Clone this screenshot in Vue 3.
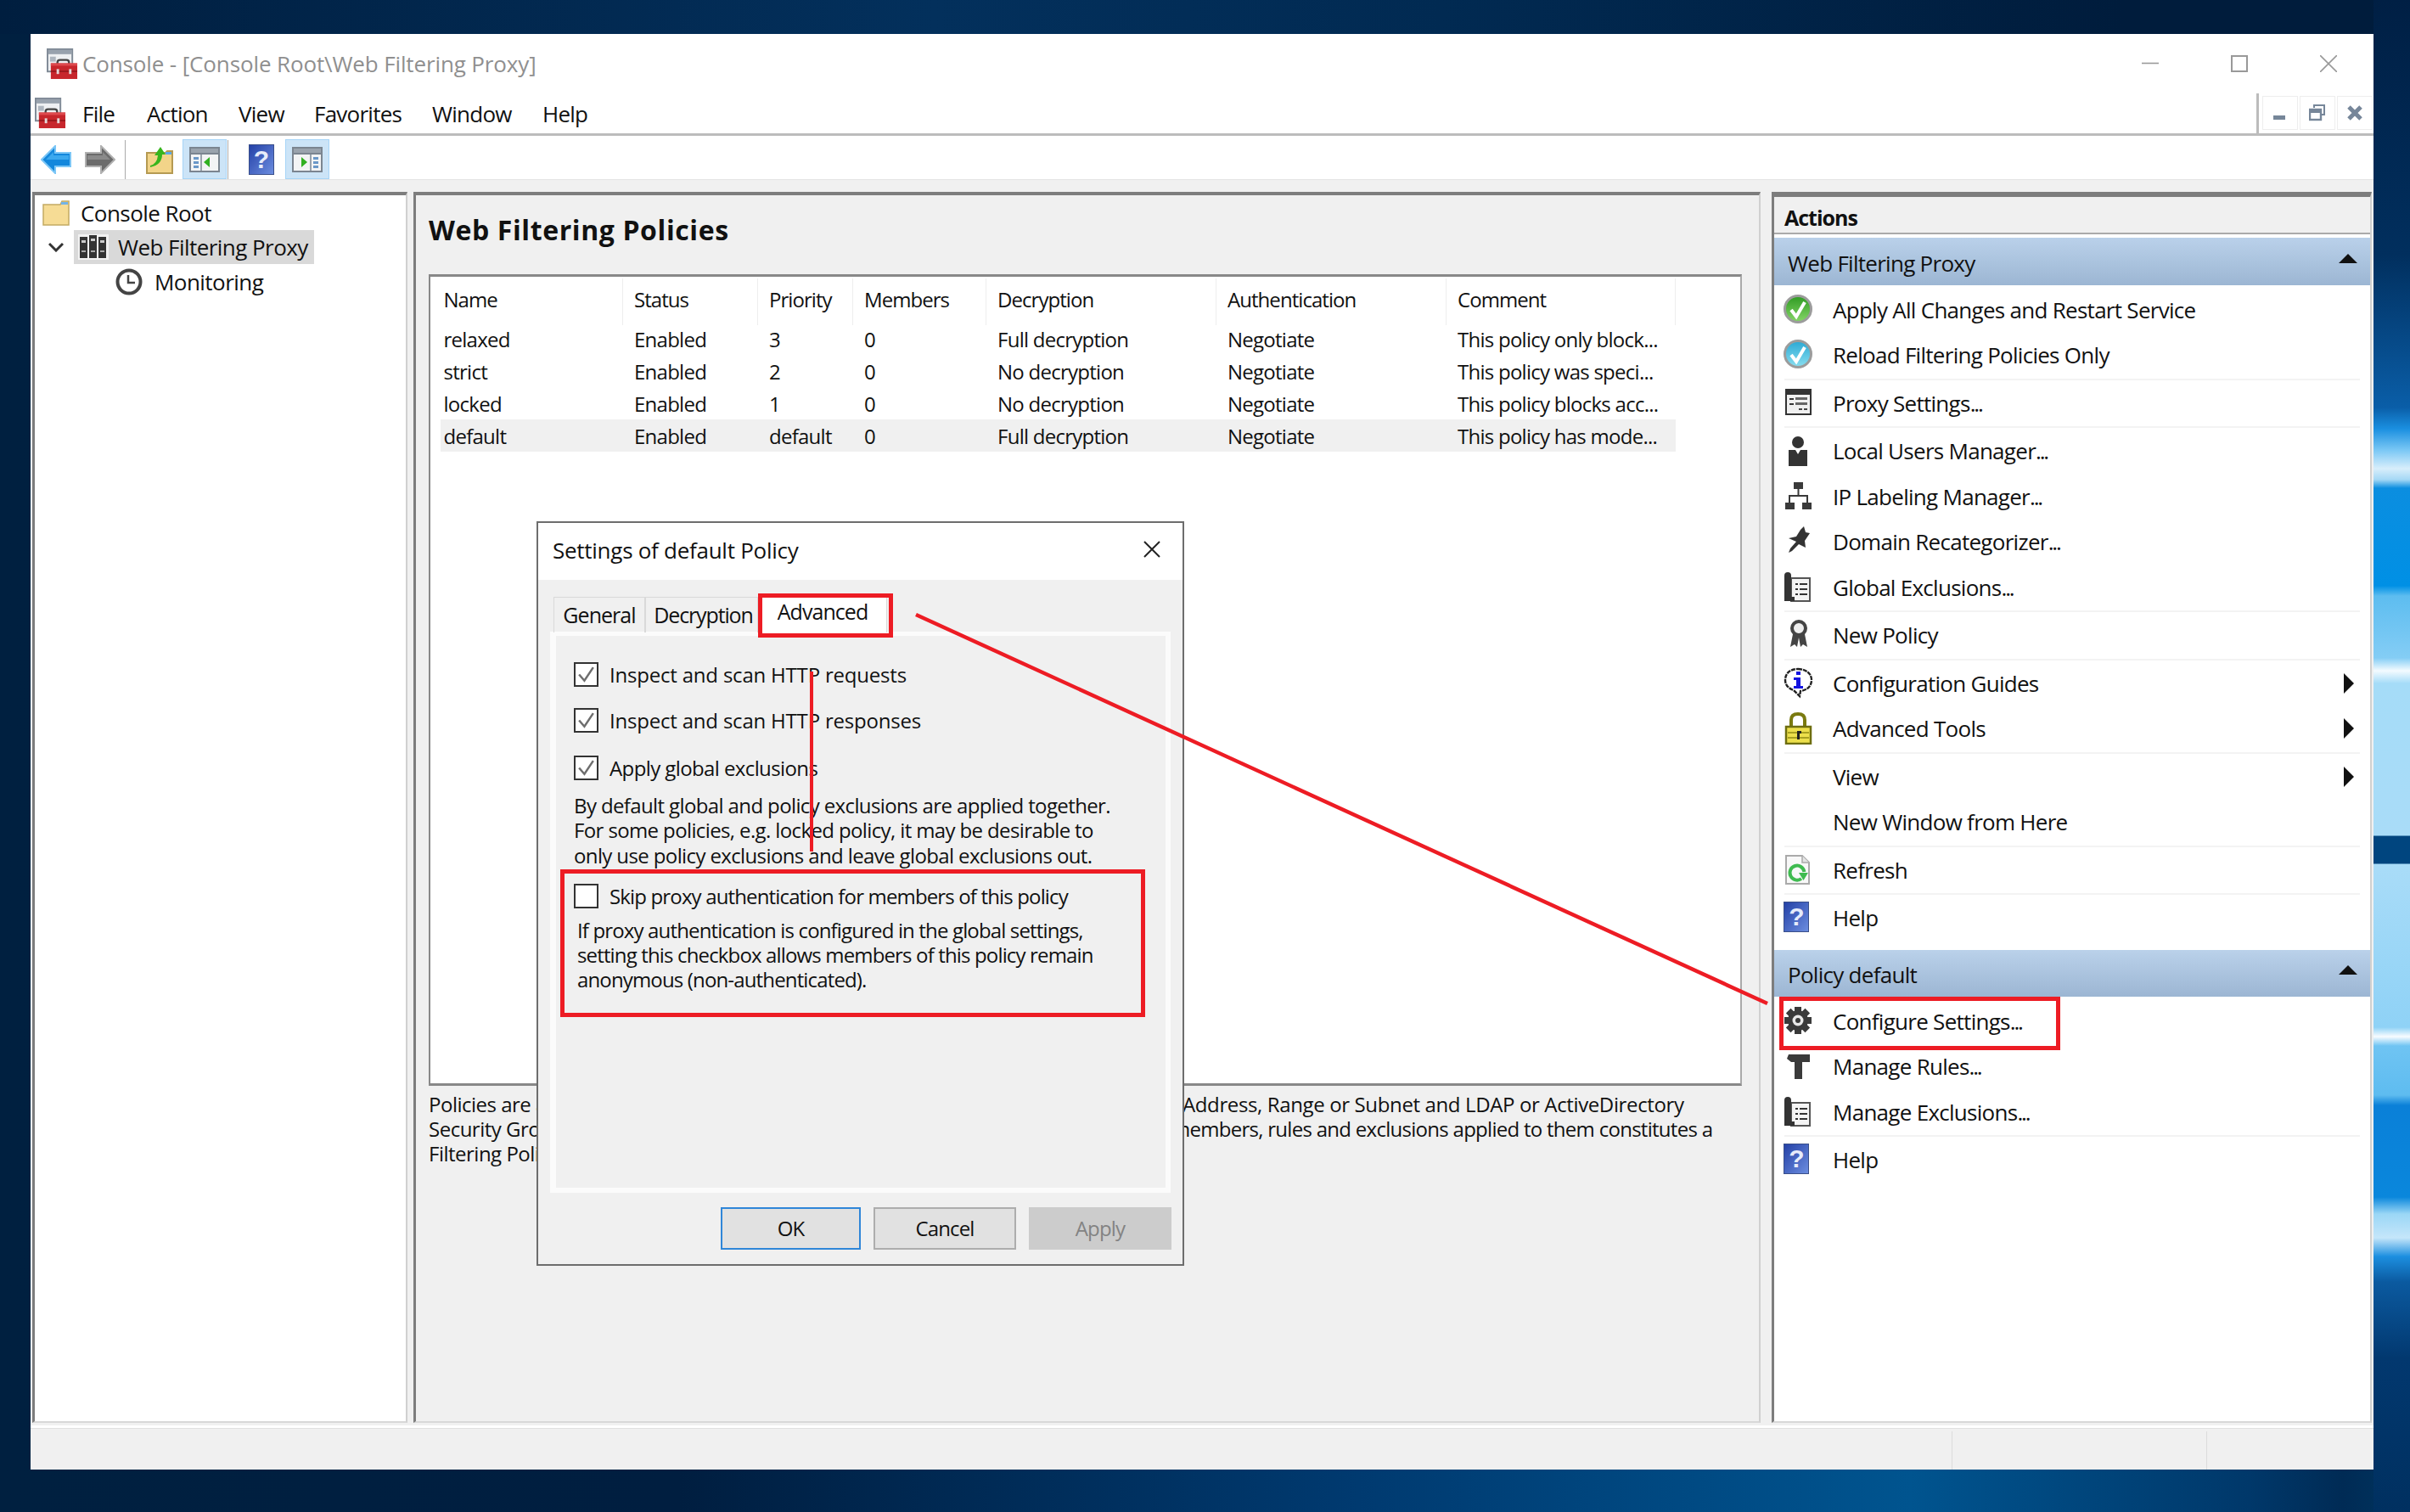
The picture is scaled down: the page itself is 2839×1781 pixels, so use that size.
<script setup>
const menus = ['File', 'Action', 'View', 'Favorites', 'Window', 'Help']

const columns = ['Name', 'Status', 'Priority', 'Members', 'Decryption', 'Authentication', 'Comment']
const policies = [
  ['relaxed', 'Enabled', '3', '0', 'Full decryption', 'Negotiate', 'This policy only block...'],
  ['strict', 'Enabled', '2', '0', 'No decryption', 'Negotiate', 'This policy was speci...'],
  ['locked', 'Enabled', '1', '0', 'No decryption', 'Negotiate', 'This policy blocks acc...'],
  ['default', 'Enabled', 'default', '0', 'Full decryption', 'Negotiate', 'This policy has mode...']
]

const descLines = [
  ['Policies are assigned', 'Address, Range or Subnet and LDAP or ActiveDirectory'],
  ['Security Groups. A set', 'members, rules and exclusions applied to them constitutes a'],
  ['Filtering Policy.', '']
]

const icons = {
  toolbox: '<rect x="1" y="1" width="30" height="27" fill="#eef0f2" stroke="#7f8a96" stroke-width="2"/><rect x="2" y="2" width="28" height="5" fill="#98a2ad"/><rect x="4" y="10" width="7" height="6" fill="#aeb6bf"/><path d="M13 20v-3q0-3 3-3h8q3 0 3 3v3" fill="none" stroke="#444" stroke-width="2.4"/><rect x="5" y="18" width="32" height="19" fill="#c7262c"/><rect x="5" y="18" width="32" height="3" fill="#de4a4e"/><rect x="5" y="27" width="32" height="1.5" fill="#8f1418"/><rect x="12" y="25" width="3" height="6" fill="#e4d8d8"/><rect x="27" y="25" width="3" height="6" fill="#e4d8d8"/>',
  back: '<path d="M1 17 17 1v8h18v16H17v8z" fill="#1387dc" stroke="#7cc6f6" stroke-width="2"/><path d="M6 17 15 8v4h18v5z" fill="#3aa8ee"/>',
  forward: '<path d="M35 17 19 1v8H1v16h18v8z" fill="#6b6b6b" stroke="#b0b0b0" stroke-width="2"/><path d="M30 17 21 8v4H3v5z" fill="#8a8a8a"/>',
  folderUp: '<path d="M1 9h22l2-2h6v26H1z" fill="#f2d489" stroke="#b59a52" stroke-width="2"/><rect x="23" y="8" width="7" height="3" fill="#58a8e8"/><path d="M5 24q8-2 9-12h-4l7-10 6 9h-4q0 12-14 15z" fill="#37b51d"/>',
  panelLeft: '<rect x="1" y="1" width="34" height="28" fill="#f3f4f5" stroke="#7b8590" stroke-width="2"/><rect x="2" y="2" width="32" height="5" fill="#9aa3ad"/><rect x="2" y="7" width="32" height="2" fill="#7b8590"/><rect x="13" y="9" width="2" height="19" fill="#9aa3ad"/><rect x="5" y="12" width="6" height="3" fill="#6b98c8"/><rect x="5" y="17" width="6" height="3" fill="#6b98c8"/><rect x="5" y="22" width="6" height="3" fill="#6b98c8"/><path d="M24 12v12l-7-6z" fill="#31b021"/>',
  panelRight: '<rect x="1" y="1" width="34" height="28" fill="#f3f4f5" stroke="#7b8590" stroke-width="2"/><rect x="2" y="2" width="32" height="5" fill="#9aa3ad"/><rect x="2" y="7" width="32" height="2" fill="#7b8590"/><rect x="21" y="9" width="2" height="19" fill="#9aa3ad"/><rect x="25" y="12" width="6" height="3" fill="#6b98c8"/><rect x="25" y="17" width="6" height="3" fill="#6b98c8"/><rect x="25" y="22" width="6" height="3" fill="#6b98c8"/><path d="M11 12v12l7-6z" fill="#31b021"/>',
  help: '<defs><linearGradient id="hg" x1="0" y1="0" x2="1" y2="1"><stop offset="0" stop-color="#2340a6"/><stop offset="1" stop-color="#6d8ee0"/></linearGradient></defs><rect x="0.5" y="0.5" width="29" height="35" fill="url(#hg)" stroke="#3a4f8a"/><text x="15" y="28" font-family="Liberation Sans, sans-serif" font-weight="700" font-size="30" text-anchor="middle" fill="#e6ecfa">?</text>',
  folder: '<path d="M1 5h20l2-4h8v28H1z" fill="#f6dc95" stroke="#c3aa63" stroke-width="1.5"/><rect x="22" y="2" width="8" height="3" fill="#74b4e8"/>',
  servers: '<rect x="0" y="0" width="36" height="30" fill="#f2f2f2"/><rect x="2" y="3" width="9" height="25" fill="#333"/><rect x="13" y="1" width="9" height="27" fill="#333"/><rect x="24" y="3" width="9" height="25" fill="#333"/><rect x="4" y="7" width="5" height="3" fill="#ccc"/><rect x="15" y="5" width="5" height="3" fill="#ccc"/><rect x="26" y="7" width="5" height="3" fill="#ccc"/><rect x="4" y="19" width="5" height="2" fill="#aaa"/><rect x="15" y="19" width="5" height="2" fill="#aaa"/><rect x="26" y="19" width="5" height="2" fill="#aaa"/>',
  clock: '<circle cx="16" cy="16" r="13.5" fill="#fff" stroke="#444" stroke-width="4"/><path d="M15 8v9h8" fill="none" stroke="#444" stroke-width="2.5"/>',
  checkGreen: '<defs><linearGradient id="cg" x1="0" y1="0" x2="0" y2="1"><stop offset="0" stop-color="#2e9a22"/><stop offset="1" stop-color="#86d668"/></linearGradient></defs><circle cx="17" cy="18" r="15.5" fill="url(#cg)" stroke="#9c9c9c" stroke-width="3"/><path d="M9 19l6 8 10-17" fill="none" stroke="#fff" stroke-width="4"/>',
  checkBlue: '<defs><linearGradient id="cb" x1="0" y1="0" x2="0" y2="1"><stop offset="0" stop-color="#2aa8d4"/><stop offset="1" stop-color="#8adff0"/></linearGradient></defs><circle cx="17" cy="18" r="15.5" fill="url(#cb)" stroke="#9c9c9c" stroke-width="3"/><path d="M9 19l6 8 10-17" fill="none" stroke="#fff" stroke-width="4"/>',
  settings: '<rect x="3" y="3" width="29" height="29" fill="#f0f0f0" stroke="#333" stroke-width="2"/><rect x="3" y="3" width="29" height="6" fill="#333"/><rect x="7" y="13" width="5" height="2" fill="#333"/><rect x="7" y="19" width="5" height="2" fill="#333"/><rect x="14" y="12" width="14" height="3" fill="#666"/><rect x="14" y="18" width="14" height="3" fill="#666"/><rect x="18" y="25" width="4" height="2" fill="#444"/><rect x="24" y="25" width="4" height="2" fill="#444"/>',
  user: '<circle cx="17" cy="9" r="7" fill="#333"/><path d="M6 18h8l3 5 3-5h8v19H6z" fill="#333"/>',
  network: '<rect x="12" y="2" width="11" height="8" fill="#3a3a3a"/><rect x="16.5" y="10" width="2" height="8" fill="#3a3a3a"/><path d="M7 26v-8h21v8" fill="none" stroke="#3a3a3a" stroke-width="2"/><rect x="2" y="26" width="11" height="8" fill="#3a3a3a"/><rect x="22" y="26" width="11" height="8" fill="#3a3a3a"/>',
  pin: '<path d="M24 1l2 7 5 1-6 9 1 8-8-4-8 8-4 2 2-5 7-8-9-4 9-2 5-8z" fill="#333"/>',
  exclusions: '<rect x="9" y="8" width="22" height="27" fill="#f4f4f4" stroke="#555" stroke-width="2"/><path d="M1 5q0-4 4-4t4 4v25H1z" fill="#333"/><rect x="1" y="30" width="12" height="5" fill="#333"/><rect x="14" y="14" width="3" height="2" fill="#333"/><rect x="19" y="14" width="9" height="2" fill="#333"/><rect x="14" y="20" width="3" height="2" fill="#333"/><rect x="19" y="20" width="9" height="2" fill="#333"/><rect x="14" y="26" width="3" height="2" fill="#333"/><rect x="19" y="26" width="9" height="2" fill="#333"/>',
  ribbon: '<path d="M11 18 8 33l5-3 3 3 2-11 2 11 3-3 5 3-3-15z" fill="#444"/><circle cx="18" cy="11" r="8" fill="#eee" stroke="#444" stroke-width="4"/>',
  info: '<path d="M17 2c9 0 16 5 16 13s-6 12-13 13l-1 6-7-7C6 25 2 21 2 15 2 7 8 2 17 2z" fill="#fff" stroke="#222" stroke-width="2.4" stroke-dasharray="5 1"/><rect x="15" y="5" width="5" height="4" fill="#1414e0"/><path d="M12 12h8v10h3v3H12v-3h3v-7h-3z" fill="#1414e0"/>',
  lock: '<path d="M9 17V9q0-7 8-7t8 7v8" fill="none" stroke="#7a7a10" stroke-width="4"/><rect x="3" y="17" width="29" height="20" fill="#ecdf4c" stroke="#6e6e10" stroke-width="2.5"/><rect x="5" y="23" width="25" height="2" fill="#a8a020"/><rect x="5" y="29" width="25" height="2" fill="#a8a020"/><path d="M16 22h5v3h-2v7h-3z" fill="#222"/>',
  refresh: '<path d="M3 2h19l8 8v25H3z" fill="#f8f8f8" stroke="#aaa" stroke-width="2"/><path d="M22 2v8h8" fill="#e4e4e4" stroke="#aaa" stroke-width="1.5"/><path d="M21 29a8.5 8.5 0 1 1 3.4-8" fill="none" stroke="#3fbb50" stroke-width="4"/><path d="M18 22h11l-5.500 9z" fill="#3fbb50"/>',
  gear: '<g fill="#3a3a3a"><rect x="13" y="2" width="8" height="32"/><rect x="13" y="2" width="8" height="32" transform="rotate(45 17 18)"/><rect x="13" y="2" width="8" height="32" transform="rotate(90 17 18)"/><rect x="13" y="2" width="8" height="32" transform="rotate(135 17 18)"/><circle cx="17" cy="18" r="12"/></g><circle cx="17" cy="18" r="6.500" fill="#e8e8e8"/><circle cx="17" cy="18" r="3" fill="#3a3a3a"/>',
  hammer: '<path d="M6 5h25v9h-9v20h-9V14H9l-5-4z" fill="#3a3a3a"/>'
}

const topActions = [
  { label: 'Apply All Changes and Restart Service', icon: 'checkGreen' },
  { label: 'Reload Filtering Policies Only', icon: 'checkBlue', sep: true },
  { label: 'Proxy Settings', dots: true, icon: 'settings', sep: true },
  { label: 'Local Users Manager', dots: true, icon: 'user' },
  { label: 'IP Labeling Manager', dots: true, icon: 'network' },
  { label: 'Domain Recategorizer', dots: true, icon: 'pin' },
  { label: 'Global Exclusions', dots: true, icon: 'exclusions', sep: true },
  { label: 'New Policy', icon: 'ribbon', sep: true },
  { label: 'Configuration Guides', icon: 'info', more: true },
  { label: 'Advanced Tools', icon: 'lock', more: true, sep: true },
  { label: 'View', more: true },
  { label: 'New Window from Here', sep: true },
  { label: 'Refresh', icon: 'refresh', sep: true },
  { label: 'Help', icon: 'help' }
]

const policyActions = [
  { label: 'Configure Settings', dots: true, icon: 'gear' },
  { label: 'Manage Rules', dots: true, icon: 'hammer' },
  { label: 'Manage Exclusions', dots: true, icon: 'exclusions', sep: true },
  { label: 'Help', icon: 'help' }
]

const groups = [
  { title: 'Web Filtering Proxy', items: topActions },
  { title: 'Policy default', items: policyActions }
]

const options = [
  { label: 'Inspect and scan HTTP requests', kind: 'http' },
  { label: 'Inspect and scan HTTP responses', kind: 'http' },
  { label: 'Apply global exclusions', kind: 'global' }
]
</script>

<template>
  <div class="desktop">
    <div class="window">
      <header class="titlebar">
        <svg class="ic-toolbox" viewBox="0 0 38 38" v-html="icons.toolbox"></svg>
        <span class="title-text">Console - [Console Root\Web Filtering Proxy]</span>
        <div class="caption">
          <svg viewBox="0 0 20 20"><path d="M0 9.5h20" stroke="#999" stroke-width="1.6" /></svg>
          <svg viewBox="0 0 20 20"><rect x="1" y="1" width="18" height="18" fill="none" stroke="#999" stroke-width="2" /></svg>
          <svg viewBox="0 0 20 20"><path d="M0 0l20 20M20 0 0 20" stroke="#999" stroke-width="1.6" /></svg>
        </div>
      </header>

      <nav class="menubar">
        <svg class="ic-toolbox" viewBox="0 0 38 38" v-html="icons.toolbox"></svg>
        <div class="menus">
          <span v-for="m in menus" :key="m">{{ m }}</span>
        </div>
        <div class="mdi">
          <div class="mdi-btn"><svg viewBox="0 0 20 20"><rect x="2" y="13" width="14" height="5" fill="#768699" /></svg></div>
          <div class="mdi-btn"><svg viewBox="0 0 20 20"><path d="M6 4V1h12v11h-3" fill="none" stroke="#768699" stroke-width="2" /><rect x="1" y="6" width="13" height="12" fill="none" stroke="#768699" stroke-width="2.4" /><rect x="1" y="6" width="13" height="4" fill="#768699" /></svg></div>
          <div class="mdi-btn"><svg viewBox="0 0 20 20"><path d="M3 3l14 14M17 3 3 17" stroke="#768699" stroke-width="5" /></svg></div>
        </div>
      </nav>

      <div class="toolbar">
        <svg class="tb-arrow" viewBox="0 0 36 34" v-html="icons.back"></svg>
        <svg class="tb-arrow tb-forward" viewBox="0 0 36 34" v-html="icons.forward"></svg>
        <i class="tb-sep"></i>
        <svg class="tb-folder" viewBox="0 0 32 34" v-html="icons.folderUp"></svg>
        <div class="tb-toggle"><svg viewBox="0 0 36 30" v-html="icons.panelLeft"></svg></div>
        <i class="tb-sep tb-sep2"></i>
        <svg class="tb-help" viewBox="0 0 30 36" v-html="icons.help"></svg>
        <div class="tb-toggle tb-toggle2"><svg viewBox="0 0 36 30" v-html="icons.panelRight"></svg></div>
      </div>

      <main class="workspace">
        <section class="panel tree">
          <div class="tree-row root-row">
            <svg class="ic-folder" viewBox="0 0 32 30" v-html="icons.folder"></svg>
            <span>Console Root</span>
          </div>
          <div class="tree-row proxy-row">
            <svg class="chevron" viewBox="0 0 18 12"><path d="M1 2l8 8 8-8" fill="none" stroke="#333" stroke-width="3" /></svg>
            <div class="selected-node">
              <svg class="ic-servers" viewBox="0 0 36 30" v-html="icons.servers"></svg>
              <span>Web Filtering Proxy</span>
            </div>
          </div>
          <div class="tree-row monitor-row">
            <svg class="ic-clock" viewBox="0 0 32 32" v-html="icons.clock"></svg>
            <span>Monitoring</span>
          </div>
        </section>

        <section class="panel center">
          <h1 class="center-title">Web Filtering Policies</h1>
          <div class="table-box">
            <div class="grid-row grid-head">
              <span v-for="c in columns" :key="c">{{ c }}</span>
            </div>
            <div v-for="(p, i) in policies" :key="p[0]" class="grid-row" :class="{ selected: i === 3 }">
              <span v-for="(v, j) in p" :key="j">{{ v }}</span>
            </div>
          </div>
          <div class="description">
            <div v-for="(l, i) in descLines" :key="i" class="desc-line">
              <span class="desc-left">{{ l[0] }}</span>
              <span class="desc-right">{{ l[1] }}</span>
            </div>
          </div>
        </section>

        <aside class="panel actions">
          <div class="actions-head">Actions</div>
          <div v-for="g in groups" :key="g.title" class="group">
            <div class="group-head">
              <span class="group-title">{{ g.title }}</span>
              <svg class="collapse" viewBox="0 0 22 11"><path d="M11 0l11 11H0z" fill="#111" /></svg>
            </div>
            <div class="group-list">
              <template v-for="it in g.items" :key="it.label">
                <div class="action">
                  <span class="action-icon">
                    <svg v-if="it.icon" viewBox="0 0 36 38" v-html="icons[it.icon]"></svg>
                  </span>
                  <span class="action-label">{{ it.label }}<span v-if="it.dots" class="dots">...</span></span>
                  <svg v-if="it.more" class="more" viewBox="0 0 12 24"><path d="M0 0l12 12L0 24z" fill="#111" /></svg>
                </div>
                <div v-if="it.sep" class="action-sep"></div>
              </template>
            </div>
          </div>
        </aside>
      </main>

      <footer class="statusbar">
        <i></i><i></i><i></i>
      </footer>
    </div>

    <div class="dialog">
      <div class="dialog-title">
        <span>Settings of default Policy</span>
        <svg viewBox="0 0 20 20"><path d="M1 1l18 18M19 1 1 19" stroke="#222" stroke-width="2" /></svg>
      </div>
      <div class="tabs">
        <span class="tab">General</span>
        <span class="tab">Decryption</span>
        <span class="tab active">Advanced</span>
      </div>
      <div class="page">
        <div v-for="o in options" :key="o.label" class="check-row" :class="o.kind">
          <span class="box"><svg viewBox="0 0 24 24"><path d="M4 12l6 7L20 4" fill="none" stroke="#6e6e6e" stroke-width="2.4" /></svg></span>
          <span>{{ o.label }}</span>
        </div>
        <p class="note first">By default global and policy exclusions are applied together.<br />For some policies, e.g. locked policy, it may be desirable to<br />only use policy exclusions and leave global exclusions out.</p>
        <div class="check-row skip">
          <span class="box"></span>
          <span>Skip proxy authentication for members of this policy</span>
        </div>
        <p class="note second">If proxy authentication is configured in the global settings,<br />setting this checkbox allows members of this policy remain<br />anonymous (non-authenticated).</p>
      </div>
      <div class="buttons">
        <button class="btn ok">OK</button>
        <button class="btn cancel">Cancel</button>
        <button class="btn apply">Apply</button>
      </div>
    </div>

    <svg class="annotations" viewBox="0 0 2839 1781">
      <g fill="none" stroke="#ed1c24" stroke-width="5">
        <rect x="895.5" y="701.5" width="154" height="47" />
        <rect x="662.5" y="1026.5" width="684" height="169" />
        <rect x="2098.5" y="1176.5" width="326" height="58" />
      </g>
      <path d="M956 791v212" stroke="#ed1c24" stroke-width="4" />
      <path d="M1079 724 2082 1182" stroke="#ed1c24" stroke-width="4.500" />
    </svg>
  </div>
</template>

<style scoped>
.desktop {
  position: relative;
  box-sizing: border-box;
  width: 2839px;
  height: 1781px;
  overflow: hidden;
  padding: 40px 43px 50px 36px;
  font-family: "Open Sans", "Noto Sans", sans-serif;
  color: #111;
  background-color: #002244;
  background-image:
    linear-gradient(180deg, #001f44 0, #012f5e 300px, #0a5ea8 480px, #1a8fe0 505px, #79c7f5 530px, #d8eefb 552px, #a4d8f5 565px, #0b8ee0 575px, #0090e5 690px, #5dbdf0 702px, #84cdf5 775px, #f4fbff 790px, #a5dcf8 805px, #a9dcf8 984px, #00457f 985px, #00457f 1017px, #a9dcf8 1018px, #8fd2f6 1210px, #f8fcff 1221px, #6fc4f3 1232px, #5ebcf0 1290px, #0a80d8 1302px, #0a87dc 1410px, #9bd7f6 1430px, #c5e6fa 1458px, #1c8fe0 1480px, #0b5aa0 1510px, #02386f 1600px, #003060 1781px),
    linear-gradient(90deg, #001e3f 0, #03305c 1100px, #012a52 1700px, #001c3c 2500px, #001c3c 2839px),
    linear-gradient(90deg, #002040 0, #001e40 800px, #003a70 1600px, #00548f 2250px, #00386a 2650px, #002b55 2760px, #003560 2839px);
  background-size: 43px 100%, 100% 40px, 100% 100%;
  background-position: right top, left top, left top;
  background-repeat: no-repeat;
}

.window {
  display: flex;
  flex-direction: column;
  height: 100%;
  background: #f0f0f0;
}

.titlebar {
  display: flex;
  align-items: center;
  height: 70px;
  padding-left: 19px;
  background: #fff;
}
.ic-toolbox { width: 37px; height: 37px; flex: none; }
.title-text {
  margin-left: 5px;
  font-size: 26px;
  letter-spacing: -0.13px;
  color: #8f8f8f;
}
.caption {
  display: flex;
  gap: 85px;
  margin-left: auto;
  padding-right: 43px;
}
.caption svg { width: 20px; height: 20px; }

.menubar {
  display: flex;
  align-items: center;
  height: 50px;
  padding-left: 5px;
  background: #fff;
  border-bottom: 3px solid #bcbcbc;
  box-sizing: border-box;
}
.menus {
  display: grid;
  grid-template-columns: 76px 108px 89px 139px 130px 80px;
  margin-left: 19px;
  font-size: 26px;
  letter-spacing: -0.75px;
}
.mdi {
  display: flex;
  gap: 2px;
  align-self: stretch;
  margin-left: auto;
  padding: 3px 1px 4px 4px;
  border-left: 3px solid #bcbcbc;
  background: #fff;
}
.mdi-btn {
  display: flex;
  align-items: center;
  justify-content: center;
  width: 40px;
  border: 1px solid #eee;
}
.mdi-btn svg { width: 20px; height: 20px; }

.toolbar {
  display: flex;
  align-items: center;
  height: 52px;
  box-sizing: border-box;
  padding: 4px 0 0 12px;
  background: #fff;
  border-bottom: 1px solid #e4e4e4;
}
.tb-arrow { width: 36px; height: 34px; }
.tb-forward { margin-left: 16px; }
.tb-sep { width: 1px; height: 46px; margin-left: 11px; background: #aaa; }
.tb-folder { width: 32px; height: 34px; margin-left: 24px; }
.tb-toggle {
  display: flex;
  align-items: center;
  justify-content: center;
  box-sizing: border-box;
  width: 52px;
  height: 47px;
  margin-left: 11px;
  background: #cce4f7;
  border: 1px solid #a6d4f7;
}
.tb-toggle svg { width: 36px; height: 30px; }
.tb-sep2 { margin-left: 1px; }
.tb-help { width: 30px; height: 36px; margin-left: 24px; }
.tb-toggle2 { margin-left: 13px; }

.workspace {
  display: flex;
  flex: 1;
  min-height: 0;
  padding: 14px 0 3px 2px;
  border-bottom: 3px solid #fff;
}

.panel {
  box-sizing: border-box;
  border-top: 4px solid #7d7d7d;
  border-left: 3px solid #7d7d7d;
  border-right: 2px solid #d0d0d0;
  border-bottom: 2px solid #d8d8d8;
}

.tree {
  width: 442px;
  padding-top: 1px;
  background: #fff;
  font-size: 26px;
  letter-spacing: -0.55px;
}
.tree-row {
  display: flex;
  align-items: center;
  height: 40px;
}
.root-row { padding-left: 9px; }
.ic-folder { width: 32px; height: 30px; margin-right: 13px; }
.proxy-row { padding-left: 16px; }
.chevron { width: 18px; height: 12px; margin-right: 12px; }
.selected-node {
  display: flex;
  align-items: center;
  height: 40px;
  padding: 0 0 0 5px;
  width: 283px;
  box-sizing: border-box;
  background: #d9d9d9;
}
.ic-servers { width: 36px; height: 30px; margin-right: 11px; }
.monitor-row { padding-left: 95px; height: 42px; }
.ic-clock { width: 32px; height: 32px; margin-right: 14px; }

.center {
  width: 1587px;
  margin-left: 7px;
  padding-left: 15px;
  background: #f0f0f0;
}
.center-title {
  margin: 21px 0 0;
  height: 40px;
  font-size: 32px;
  line-height: 40px;
  font-weight: 700;
  letter-spacing: 0.6px;
}
.table-box {
  box-sizing: border-box;
  width: 1547px;
  height: 956px;
  margin-top: 32px;
  padding: 2px 0 0 12px;
  background: #fff;
  border-top: 3px solid #888;
  border-left: 2px solid #888;
  border-right: 2px solid #aaa;
  border-bottom: 3px solid #888;
  font-size: 24px;
  letter-spacing: -0.74px;
}
.grid-row {
  display: grid;
  grid-template-columns: 215px 159px 112px 157px 271px 271px 270px;
  width: 1455px;
  height: 38px;
  align-items: center;
  white-space: nowrap;
}
.grid-row > span { padding-left: 13px; }
.grid-row > span:first-child { padding-left: 3.5px; }
.grid-head {
  height: 55px;
  margin-bottom: -3px;
  letter-spacing: -0.95px;
}
.grid-head > span {
  display: flex;
  align-items: center;
  height: 55px;
  box-sizing: border-box;
  padding-bottom: 6px;
  border-right: 1px solid #eee;
}
.selected { background: #f0f0f0; }

.description {
  margin-top: 7px;
  font-size: 24px;
  line-height: 29px;
  letter-spacing: -0.5px;
}
.desc-line { display: flex; white-space: nowrap; }
.desc-left { width: 888px; flex: none; }
.desc-line:nth-child(1) .desc-right { letter-spacing: -0.37px; }
.desc-line:nth-child(2) .desc-right { margin-left: -13px; letter-spacing: -0.72px; }

.actions {
  width: 707px;
  margin-left: 13px;
  background: #fff;
  border-top-width: 6px;
  font-size: 26px;
  letter-spacing: -0.72px;
}
.actions-head {
  height: 44px;
  box-sizing: border-box;
  padding-left: 12px;
  line-height: 48px;
  font-size: 25px;
  font-weight: 700;
  letter-spacing: -1px;
  background: #f0f0f0;
  border-bottom: 2px solid #aaa;
}
.group-head {
  display: flex;
  align-items: center;
  justify-content: space-between;
  height: 56px;
  margin-top: 4px;
  padding: 0 15px 0 16px;
  box-sizing: border-box;
  background: linear-gradient(180deg, #bad1ea, #9cb6d3);
}
.group-title { padding-top: 3px; }
.group + .group { margin-top: 11px; }
.group + .group .group-head { height: 55px; margin-top: 0; }
.collapse { width: 22px; height: 11px; margin-bottom: 8px; }
.group-list { padding-top: 2px; }
.action {
  display: flex;
  align-items: center;
  height: 53.5px;
  padding: 0 19px 0 11px;
}
.action-icon { width: 36px; height: 38px; flex: none; }
.action-icon svg { display: block; width: 36px; height: 38px; }
.action-label { margin-left: 22px; white-space: nowrap; }
.dots { letter-spacing: -2.2px; }
.more { width: 12px; height: 24px; margin-left: auto; }
.action-sep {
  height: 3px;
  margin: 0 12px;
  background: linear-gradient(#f3f3f3, #f3f3f3) center / 100% 2px no-repeat;
}

.statusbar {
  display: grid;
  grid-template-columns: 2264px 300px 196px;
  height: 49px;
  padding-top: 3px;
  box-sizing: border-box;
  border-top: 1px solid #e0e0e0;
}
.statusbar i { border-right: 1px solid #dcdcdc; }
.statusbar i:last-child { border-right: 0; }

.dialog {
  position: absolute;
  left: 632px;
  top: 614px;
  box-sizing: border-box;
  width: 763px;
  height: 877px;
  background: #f0f0f0;
  border: 2px solid #6d6d6d;
  font-size: 24px;
  letter-spacing: -0.85px;
}
.dialog-title {
  display: flex;
  align-items: center;
  justify-content: space-between;
  height: 67px;
  padding: 0 26px 3px 17px;
  box-sizing: border-box;
  background: #fff;
  font-size: 26px;
  letter-spacing: -0.27px;
}
.dialog-title svg { width: 20px; height: 20px; margin-bottom: 2px; }
.tabs {
  display: flex;
  height: 42px;
  margin-top: 20px;
  padding-left: 18px;
}
.tab {
  box-sizing: border-box;
  height: 42px;
  line-height: 40px;
  border: 1px solid #d9d9d9;
  border-bottom: 0;
  text-align: center;
  font-size: 25px;
  letter-spacing: -0.95px;
}
.tab:nth-child(1) { width: 108px; }
.tab:nth-child(2) {
  width: 133px;
  padding-left: 4px;
  letter-spacing: -1.15px;
}
.tab.active {
  width: 152px;
  height: 46px;
  margin-top: -4px;
  background: #fff;
  line-height: 40px;
}
.page {
  box-sizing: border-box;
  width: 731px;
  height: 661px;
  margin: -1px 0 0 14px;
  padding: 18px 20px 0 21px;
  border: 5px solid #fbfbfb;
  border-width: 5px 6px 6px 7px;
}
.check-row {
  display: flex;
  align-items: center;
  gap: 13px;
  height: 54px;
  white-space: nowrap;
}
.check-row.http { letter-spacing: -0.2px; }
.check-row.global { margin-top: 2px; letter-spacing: -0.6px; }
.box {
  display: flex;
  flex: none;
  box-sizing: border-box;
  width: 29px;
  height: 29px;
  background: #fff;
  border: 2px solid #333;
}
.box svg { width: 25px; height: 25px; }
.note {
  margin: 3px 0 0;
  line-height: 29.3px;
  white-space: nowrap;
}
.note.first { letter-spacing: -0.62px; }
.skip { height: 40px; margin-top: 14px; }
.note.second { margin: 5px 0 0 4px; }
.buttons {
  display: flex;
  justify-content: flex-end;
  gap: 15px;
  margin-top: 17px;
  padding-right: 13px;
}
.btn {
  box-sizing: border-box;
  width: 168px;
  height: 50px;
  padding: 0 0 2px;
  font: inherit;
  letter-spacing: inherit;
  color: #111;
  background: #e1e1e1;
  border: 2px solid #adadad;
}
.ok { border-color: #2f86d8; width: 165px; }
.apply { background: #ccc; border-color: #ccc; color: #838383; }

.annotations {
  position: absolute;
  inset: 0;
  width: 2839px;
  height: 1781px;
  pointer-events: none;
}
</style>
